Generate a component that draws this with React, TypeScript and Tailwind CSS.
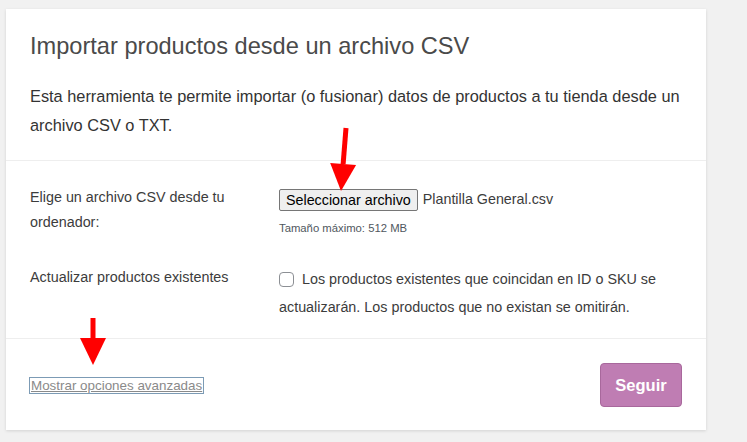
import type { ReactNode } from 'react';

const FONT = { fontFamily: '"Liberation Sans", Arial, sans-serif' };

function Row({ label, children }: { label: ReactNode; children: ReactNode }) {
    return (
        <div className="flex">
            <div className="w-[249px] shrink-0 pr-4 text-[14.35px] leading-[25px] text-[#3c3c3c]">
                {label}
            </div>
            <div className="min-w-0 flex-1">{children}</div>
        </div>
    );
}

// Red annotation arrows drawn over the form.
function Arrow({ x1, y1, x2, y2 }: { x1: number; y1: number; x2: number; y2: number }) {
    const headLen = 27;
    const dx = x2 - x1;
    const dy = y2 - y1;
    const len = Math.hypot(dx, dy);
    const ux = dx / len;
    const uy = dy / len;
    const bx = x2 - ux * headLen;
    const by = y2 - uy * headLen;
    const px = -uy * 13;
    const py = ux * 13;
    return (
        <g>
            <line x1={x1} y1={y1} x2={bx} y2={by} stroke="#f00" strokeWidth={5} />
            <polygon
                points={`${x2},${y2} ${bx + px},${by + py} ${bx - px},${by - py}`}
                fill="#f00"
            />
        </g>
    );
}

export default function App() {
    return (
        <div
            className="relative min-h-[442px] bg-[#f1f1f1] pt-[9px] pl-[6px]"
            style={FONT}
        >
            <div className="w-[700px] bg-white shadow-[0_1px_3px_rgba(0,0,0,0.13)]">
                <header className="px-6 pt-[23px] pb-5">
                    <h2 className="text-[23.6px] leading-[28px] text-[#4a4a4a]">
                        Importar productos desde un archivo CSV
                    </h2>
                    <p className="mt-[22px] text-[16.35px] leading-[29px] text-[#333]">
                        Esta herramienta te permite importar (o fusionar) datos de productos a
                        tu tienda desde un archivo CSV o TXT.
                    </p>
                </header>

                <section className="flex flex-col gap-[29px] border-t border-[#eeeeee] px-6 pt-[24px] pb-[17px]">
                    <Row
                        label={
                            <>
                                Elige un archivo CSV desde tu
                                <br />
                                ordenador:
                            </>
                        }
                    >
                        <div className="flex items-center pt-[4px] text-[14.3px] text-[#3c3c3c]">
                            <span className="rounded-[2px] border border-[#767676] bg-[#efefef] px-[6px] text-[14.3px] leading-[20px] text-black">
                                Seleccionar archivo
                            </span>
                            <span className="ml-[5px]">Plantilla General.csv</span>
                        </div>
                        <p className="mt-[9px] text-[11.3px] leading-[16px] text-[#50575e]">
                            Tamaño máximo: 512 MB
                        </p>
                    </Row>
                    <Row label="Actualizar productos existentes">
                        <p className="text-[14.35px] leading-[28px] text-[#3c3c3c]">
                            <span className="mr-[8px] inline-block h-[15px] w-[15px] translate-y-[3px] rounded-[4px] border border-[#8c8f94] bg-white" />
                            Los productos existentes que coincidan en ID o SKU se
                            actualizarán. Los productos que no existan se omitirán.
                        </p>
                    </Row>
                </section>

                <footer className="flex items-center justify-between border-t border-[#eeeeee] px-6 pt-6 pb-[23px]">
                    <a
                        href="#"
                        className="-ml-[1px] border border-[#7c9bb5] px-[1px] text-[13.4px] leading-[15px] text-[#8a8a8a] underline"
                    >
                        Mostrar opciones avanzadas
                    </a>
                    <button
                        type="button"
                        className="h-[44px] w-[82px] rounded-[4px] border border-[#a8689c] bg-[#bf7db3] text-[16.5px] font-bold text-white"
                    >
                        Seguir
                    </button>
                </footer>
            </div>

            <svg
                className="pointer-events-none absolute inset-0"
                width={747}
                height={442}
            >
                <Arrow x1={346} y1={128} x2={341} y2={191} />
                <Arrow x1={93} y1={318} x2={93} y2={365} />
            </svg>
        </div>
    );
}
